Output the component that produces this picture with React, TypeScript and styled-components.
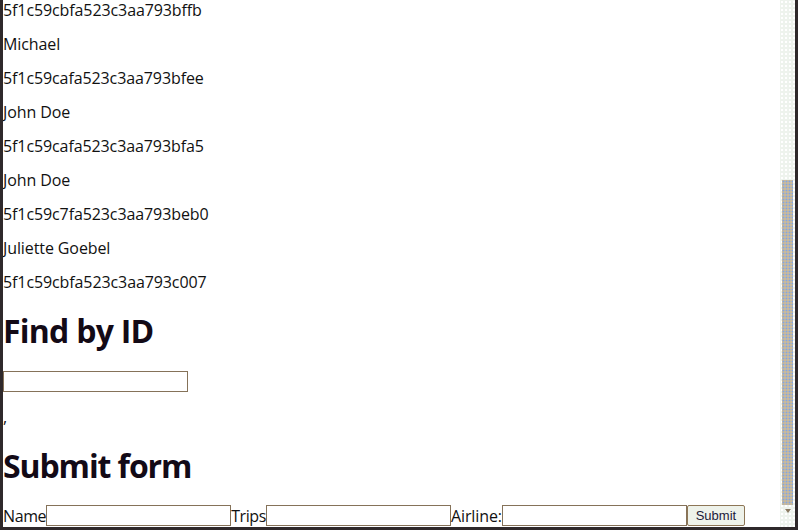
import React from "react";
import styled, { createGlobalStyle } from "styled-components";

const Global = createGlobalStyle`
  html, body { margin: 0; padding: 0; overflow: hidden; background: #2f292b; }
`;

const Frame = styled.div`
  width: 798px;
  height: 530px;
  box-sizing: border-box;
  background: #2f292b;
  padding: 0 3px 3px 3px;
  display: flex;
`;

const Viewport = styled.div`
  flex: 1;
  display: flex;
  background: #ffffff;
  min-width: 0;
`;

const Content = styled.div`
  flex: 1;
  overflow: hidden;
  padding-top: 1px;
  font-family: "Open Sans", "DejaVu Sans", sans-serif;
  font-size: 16px;
  letter-spacing: -0.1px;
  color: #111;
  min-width: 0;
`;

const Line = styled.p`
  margin: 16px 0;
  line-height: 18px;
  white-space: nowrap;
  &:first-child { margin-top: 0; }
`;

const Heading = styled.h1<{ $spacing: number }>`
  font-size: 32px;
  font-weight: 700;
  line-height: 37px;
  margin: 21px 0;
  color: #130a16;
  letter-spacing: ${(p) => p.$spacing}px;
`;

const Field = styled.input`
  box-sizing: border-box;
  width: 185px;
  height: 21px;
  border: 1px solid #857259;
  border-radius: 0;
  padding: 0 2px;
  margin: 0;
  background: #fff;
  vertical-align: bottom;
  font-size: 13px;
`;

const Form = styled.form`
  display: flex;
  align-items: flex-end;
  white-space: nowrap;
  line-height: 18px;
`;

const Label = styled.span<{ $spacing: number }>`
  line-height: 18px;
  padding-bottom: 1px;
  letter-spacing: ${(p) => p.$spacing}px;
`;

const Button = styled.button`
  box-sizing: border-box;
  height: 21px;
  width: 58px;
  margin: 0;
  padding: 0 4px;
  border: 1px solid #8d7656;
  border-radius: 2px;
  background: #eef2ea;
  color: #1c1a3a;
  font-family: "Liberation Sans", Arial, sans-serif;
  font-size: 13px;
  letter-spacing: 0;
`;

const Scrollbar = styled.div`
  width: 15px;
  background-color: #eef3ed;
  background-image: radial-gradient(#ffffff 0.8px, transparent 1px);
  background-size: 4px 4px;
  display: flex;
  flex-direction: column;
  align-items: center;
  padding-top: 180px;
  box-sizing: border-box;
`;

const Thumb = styled.div`
  width: 11px;
  height: 325px;
  background-color: #c8b99c;
  background-image: radial-gradient(#7fa6e6 0.8px, transparent 1.1px);
  background-size: 3px 3px;
`;

const Arrow = styled.div`
  margin-top: 4px;
  width: 0;
  height: 0;
  border-left: 3px solid transparent;
  border-right: 3px solid transparent;
  border-top: 4px solid #8a7a62;
`;

const ids = [
  "5f1c59cbfa523c3aa793bffb",
  "Michael",
  "5f1c59cafa523c3aa793bfee",
  "John Doe",
  "5f1c59cafa523c3aa793bfa5",
  "John Doe",
  "5f1c59c7fa523c3aa793beb0",
  "Juliette Goebel",
  "5f1c59cbfa523c3aa793c007",
];

export default function App() {
  return (
    <>
      <Global />
      <Frame>
        <Viewport>
          <Content>
            {ids.map((t, i) => (
              <Line key={i}>{t}</Line>
            ))}
            <Heading $spacing={-0.75}>Find by ID</Heading>
            <div>
              <Field type="text" />
            </div>
            <Line>,</Line>
            <Heading $spacing={-1.1}>Submit form</Heading>
            <Form onSubmit={(e) => e.preventDefault()}>
              <Label $spacing={-0.4}>Name</Label>
              <Field type="text" />
              <Label $spacing={-0.4}>Trips</Label>
              <Field type="text" />
              <Label $spacing={-0.1}>Airline:</Label>
              <Field type="text" />
              <Button type="submit">Submit</Button>
            </Form>
          </Content>
          <Scrollbar>
            <Thumb />
            <Arrow />
          </Scrollbar>
        </Viewport>
      </Frame>
    </>
  );
}
